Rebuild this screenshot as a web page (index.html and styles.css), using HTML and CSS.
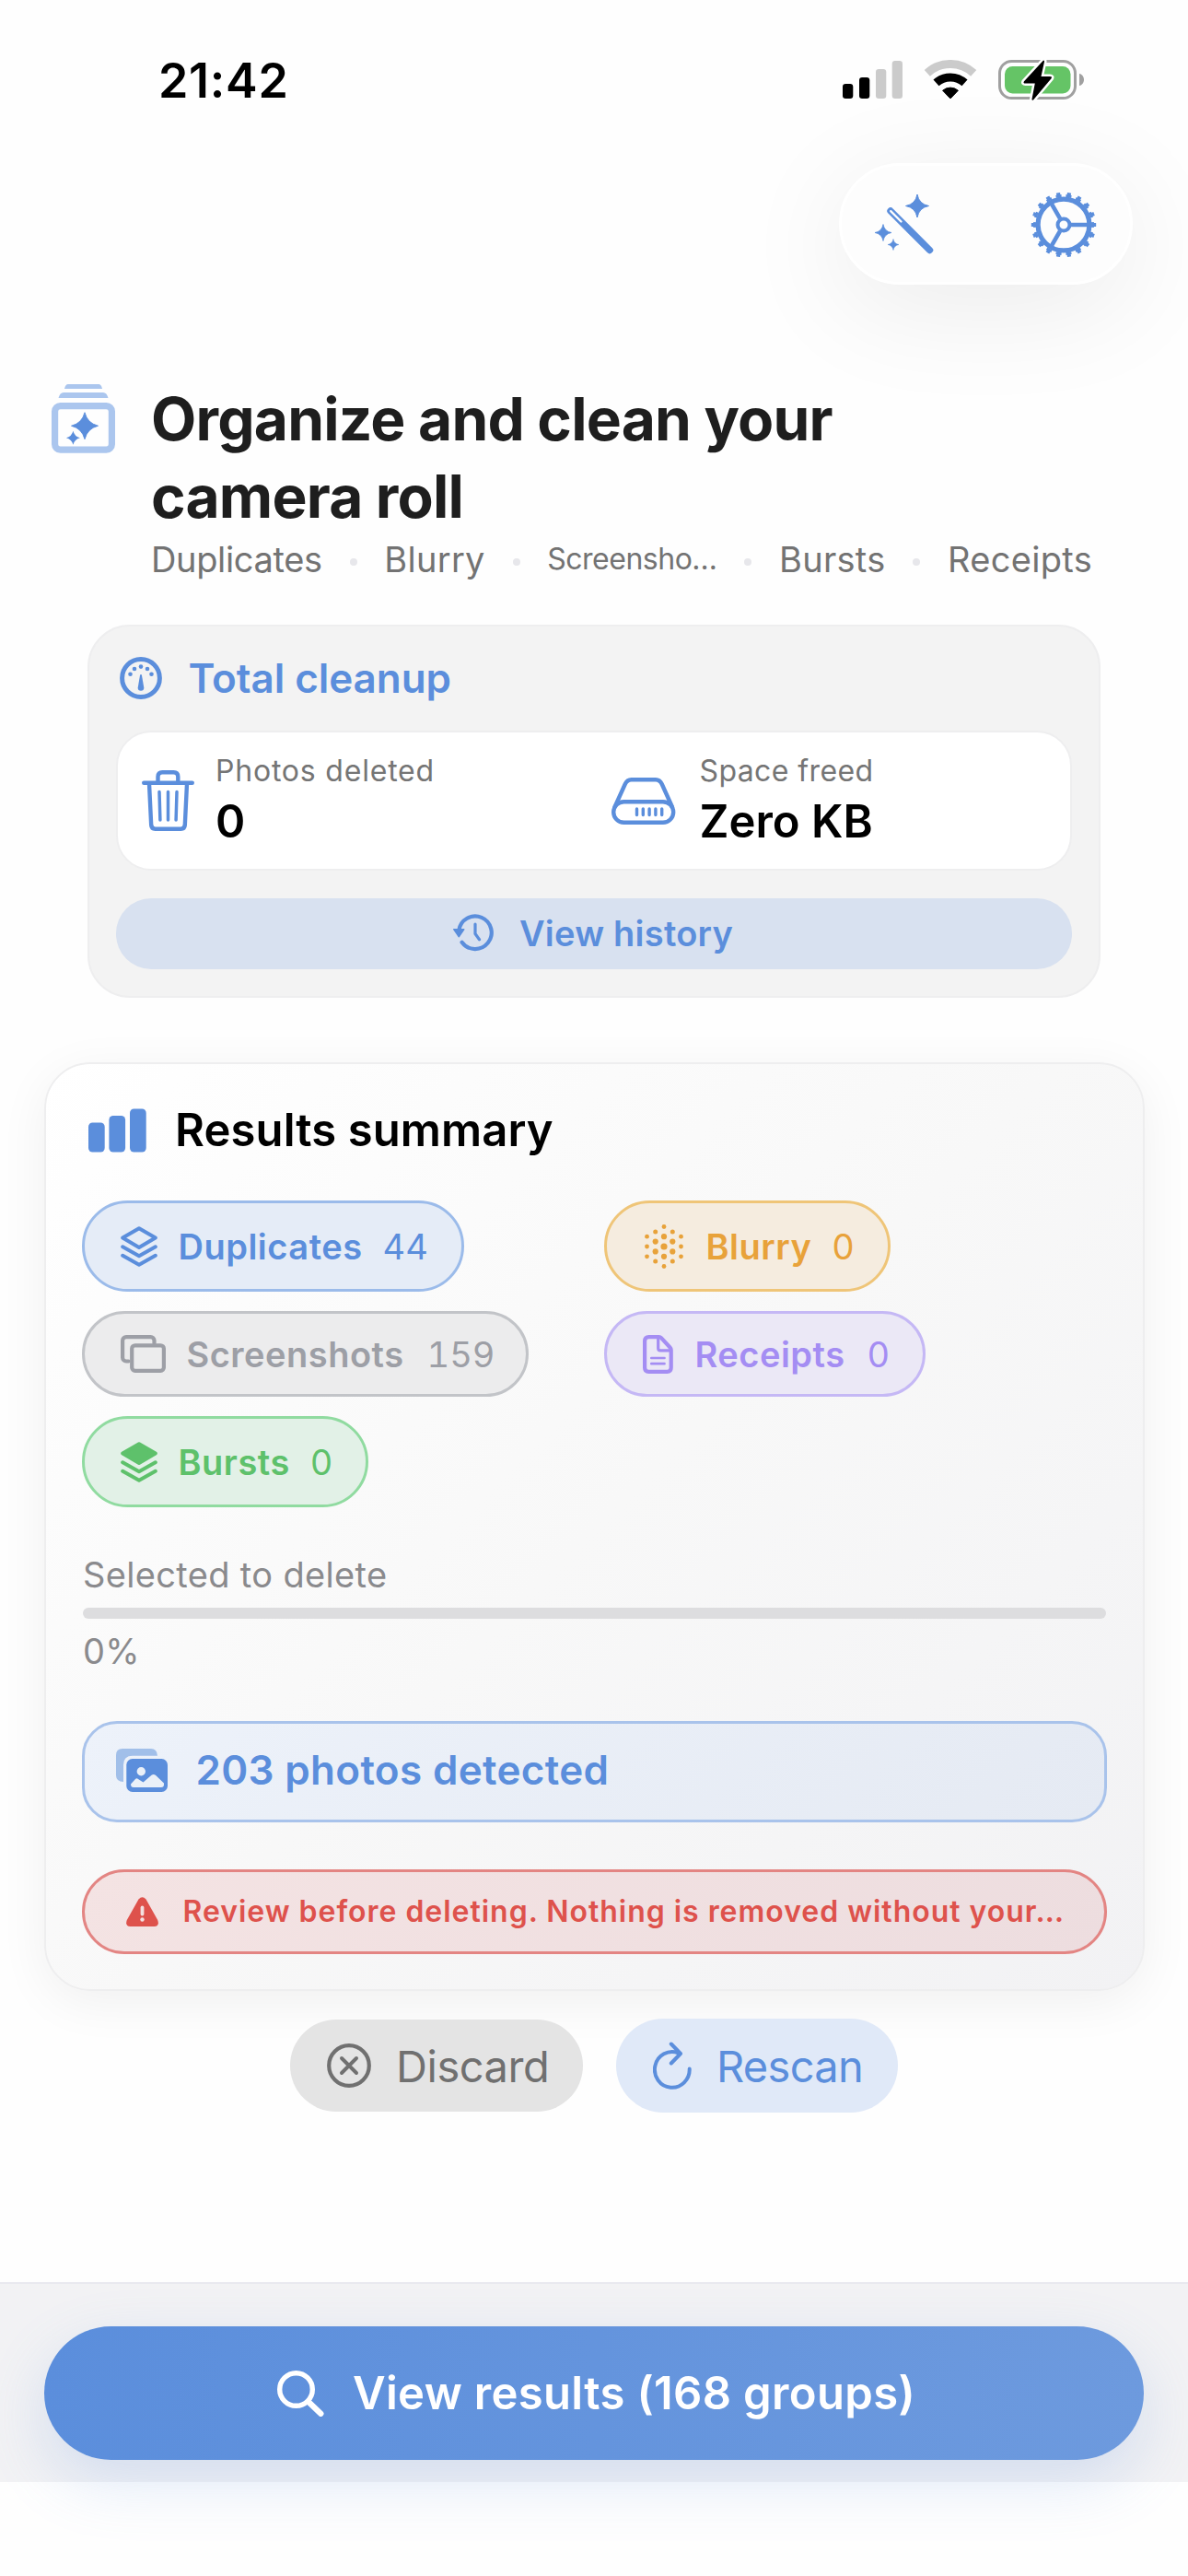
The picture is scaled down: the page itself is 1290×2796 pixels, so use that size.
FILE: index.html
```
<!DOCTYPE html>
<html lang="en">
<head>
  <meta charset="UTF-8">
  <title>Camera Roll Cleaner</title>
  <link rel="stylesheet" href="styles.css">
</head>
<body>
  <div class="screen">
    <!-- Status bar -->
    <div class="status-bar">
      <span class="time">21:42</span>
      <div class="status-icons">
        <svg width="65" height="44" viewBox="0 0 65 44">
          <rect x="0" y="26" width="11.3" height="16" rx="3.2"/>
          <rect x="18" y="19" width="11.3" height="23" rx="3.2"/>
          <rect x="36" y="10" width="11.3" height="32" rx="3.2" fill="#cbcbcb"/>
          <rect x="53.7" y="1" width="11.3" height="41" rx="3.2" fill="#cbcbcb"/>
        </svg>
        <svg width="58" height="44" viewBox="0 0 58 44" fill="none">
          <path d="M3.8 14.4A37 37 0 0 1 54.2 14.4" stroke="#cbcbcb" stroke-width="9" stroke-linejoin="round"/>
          <path d="M13.5 24.9A23 23 0 0 1 44.5 24.9" stroke="#000" stroke-width="9"/>
          <path d="M20.6 33.2A13 13 0 0 1 37.4 33.2L29.600 41.400Q29 42 28.400 41.400Z" fill="#000" stroke="#000" stroke-width="1" stroke-linejoin="round"/>
        </svg>
        <svg width="93" height="45" viewBox="0 0 93 45">
          <rect x="1.500" y="1.500" width="82" height="40" rx="13" fill="none" stroke="#a0a0a0" stroke-width="3"/>
          <rect x="7" y="7" width="71.500" height="29.500" rx="8.500" fill="#65c466"/>
          <path d="M88 15C91 15.500 93 18.500 93 21.500S91 27.500 88 28Z" fill="#a0a0a0"/>
          <path d="M49 .5Q50.300 .3 50 2L46.500 18H56Q59 18 57.500 20.300L38 43.500Q36.500 44.500 36.500 42.500L39.800 25.500H29.500Q26.500 25.500 28 23.200Z" stroke="#fff" stroke-width="5" paint-order="stroke"/>
        </svg>
      </div>
    </div>

    <!-- Toolbar -->
    <div class="toolbar">
      <div class="toolbar-pill">
        <svg width="64" height="66" viewBox="0 0 64 66" fill="#5b8edc">
          <path transform="translate(46 12.500) scale(1.25)" d="M0-10Q1.500-1.500 10 0Q1.500 1.500 0 10Q-1.500 1.500-10 0Q-1.500-1.500 0-10Z" stroke="#5b8edc" stroke-width=".8" stroke-linejoin="round"/>
          <path transform="translate(9 41.500) scale(.9)" d="M0-10Q1.500-1.500 10 0Q1.500 1.500 0 10Q-1.500 1.500-10 0Q-1.500-1.500 0-10Z" stroke="#5b8edc" stroke-width=".8" stroke-linejoin="round"/>
          <path transform="translate(20 54.500) scale(.6)" d="M0-10Q1.500-1.500 10 0Q1.500 1.500 0 10Q-1.500 1.500-10 0Q-1.500-1.500 0-10Z" stroke="#5b8edc" stroke-width=".8" stroke-linejoin="round"/>
          <path d="M17 18L59.500 60.500" stroke="#5b8edc" stroke-width="7.400" stroke-linecap="round"/>
          <path d="M17.200 18.200L28.500 29.500" stroke="#fdfdfd" stroke-width="2.400" stroke-linecap="round"/>
        </svg>
        <svg width="72" height="72" viewBox="-36 -36 72 72" fill="none" stroke="#5b8edc">
          <circle r="27.900" stroke-width="5.200"/>
          <circle r="31.500" stroke-width="3" pathLength="36" stroke-dasharray="1.100 .9" stroke-dashoffset=".55"/>
          <circle r="33.700" stroke-width="3" pathLength="36" stroke-dasharray=".7 1.300" stroke-dashoffset=".35"/>
          <circle r="6.500" stroke-width="4"/>
          <path d="M8 0H27M-4-6.900L-13.500-23.400M-4 6.900L-13.500 23.400" stroke-width="4.600"/>
        </svg>
      </div>
    </div>

    <!-- Hero -->
    <div class="hero">
      <svg class="hero-icon" width="70" height="76" viewBox="0 0 70 76">
        <path d="M18 1H51Q54 1 55 6H14Q15 1 18 1ZM13 10H56Q60 10 61.500 16H7.500Q9 10 13 10Z" fill="#abc6ee"/>
        <rect x="3.600" y="24.600" width="61.800" height="47.600" rx="6" fill="none" stroke="#abc6ee" stroke-width="7.200"/>
        <path transform="translate(36 46.200) scale(1.450)" d="M0-10Q2-2 10 0Q2 2 0 10Q-2 2-10 0Q-2-2 0-10Z" fill="#5b8edc" stroke="#5b8edc" stroke-width=".6" stroke-linejoin="round"/>
        <path transform="translate(23.400 59.200) scale(.75)" d="M0-10Q2-2 10 0Q2 2 0 10Q-2 2-10 0Q-2-2 0-10Z" fill="#5b8edc"/>
      </svg>
      <div class="hero-text">
        <h1>Organize and clean your camera roll</h1>
        <div class="categories">
          <span class="category tight">Duplicates</span>
          <i class="dot"></i>
          <span class="category">Blurry</span>
          <i class="dot"></i>
          <span class="category small">Screensho…</span>
          <i class="dot"></i>
          <span class="category">Bursts</span>
          <i class="dot"></i>
          <span class="category">Receipts</span>
        </div>
      </div>
    </div>

    <!-- Total cleanup -->
    <div class="cleanup">
      <div class="cleanup-header">
        <svg width="46" height="46" viewBox="-23 -23 46 46" fill="#5b8edc">
          <circle r="20.400" fill="none" stroke="#5b8edc" stroke-width="5"/>
          <circle cx="-11.500" cy="-4.300" r="2.300"/>
          <circle cx="-7" cy="-10" r="2.300"/>
          <circle cx="0" cy="-12.400" r="2.300"/>
          <circle cx="7" cy="-10" r="2.300"/>
          <circle cx="11.500" cy="-4.300" r="2.300"/>
          <path d="M-.9-3.500Q0-4.500 .9-3.500L3.300 10.500A3.300 3.300 0 0 1-3.300 10.500Z"/>
        </svg>
        <span>Total cleanup</span>
      </div>
      <div class="stats">
        <div class="stat">
          <svg class="trash" width="57" height="66" viewBox="0 0 57 66" fill="none" stroke="#5b8edc" stroke-width="4.400" stroke-linecap="round" stroke-linejoin="round">
            <path d="M2.200 13.700H54.800M17.500 13V7Q17.500 2.200 22.300 2.200H34.500Q39.300 2.200 39.300 7V13M8 14.500L10.200 59.500Q10.500 63.700 14.600 63.700H42.400Q46.500 63.700 46.800 59.500L49 14.500"/>
            <path d="M19 23.500L19.900 54M28.500 23.500V54M38 23.500L37.100 54" stroke-width="3.500"/>
          </svg>
          <div>
            <div class="stat-label">Photos deleted</div>
            <div class="stat-value">0</div>
          </div>
        </div>
        <div class="stat">
          <svg class="drive" width="70" height="51" viewBox="0 0 70 51" fill="none" stroke="#5b8edc" stroke-width="4.400" stroke-linecap="round">
            <rect x="2.200" y="26.200" width="65" height="22.600" rx="11.300"/>
            <path d="M3.500 32L14.800 7Q17 2.200 21.500 2.200H48Q52.500 2.200 54.700 7L66 32"/>
            <path d="M27.500 34V40.500M34.300 34V40.500M41.100 34V40.500M47.900 34V40.500M54.700 34V40.500" stroke-width="3.400"/>
          </svg>
          <div>
            <div class="stat-label space">Space freed</div>
            <div class="stat-value">Zero KB</div>
          </div>
        </div>
      </div>
      <div class="history-btn">
        <svg width="44" height="41" viewBox="0 0 44 41" fill="none" stroke="#5b8edc" stroke-linecap="round">
          <path d="M6.300 17.800A17.800 17.800 0 1 1 9.600 30.800" stroke-width="4.200"/>
          <path d="M1 16.800H11.600L6.300 24.500Z" fill="#5b8edc" stroke-width="1.800" stroke-linejoin="round"/>
          <path d="M24 11V21.500L28.500 27.800" stroke-width="3.200" stroke-linejoin="round"/>
        </svg>
        <span>View history</span>
      </div>
    </div>

    <!-- Results summary -->
    <div class="results">
      <div class="results-header">
        <svg width="63" height="48" viewBox="0 0 63 48" fill="#5b8edc">
          <rect x="0" y="15.500" width="17.700" height="32" rx="4.500"/>
          <rect x="22.400" y="8" width="17.700" height="39.500" rx="4.500"/>
          <rect x="45" y=".5" width="17.700" height="47" rx="4.500"/>
        </svg>
        <h2>Results summary</h2>
      </div>

      <div class="chips">
        <div class="chip blue">
          <svg width="40" height="44" viewBox="0 0 40 44" fill="none" stroke="currentColor" stroke-width="4" stroke-linejoin="round" stroke-linecap="round">
            <path d="M20 2.200L37.800 12.600L20 23L2.200 12.600Z"/>
            <path d="M2.200 22.300L20 32.200L37.800 22.300M2.200 31.800L20 41.800L37.800 31.800"/>
          </svg>
          <span class="chip-name">Duplicates</span>
          <span class="chip-count">44</span>
        </div>
        <div class="chip orange">
          <svg width="42" height="48" viewBox="-21 -24 42 48" fill="currentColor">
            <circle r="3.600"/>
            <circle cy="-21.500" r="2.400"/><circle cy="21.500" r="2.400"/>
            <circle cy="-10.800" r="3.100"/><circle cy="10.800" r="3.100"/>
            <circle cx="-9.300" cy="-16.100" r="2.500"/><circle cx="9.300" cy="-16.100" r="2.500"/>
            <circle cx="-9.300" cy="16.100" r="2.500"/><circle cx="9.300" cy="16.100" r="2.500"/>
            <circle cx="-9.300" cy="-5.400" r="3.100"/><circle cx="9.300" cy="-5.400" r="3.100"/>
            <circle cx="-9.300" cy="5.400" r="3.100"/><circle cx="9.300" cy="5.400" r="3.100"/>
            <circle cx="-18.500" cy="-10.800" r="2.400"/><circle cx="18.500" cy="-10.800" r="2.400"/>
            <circle cx="-18.500" r="2.400"/><circle cx="18.500" r="2.400"/>
            <circle cx="-18.500" cy="10.800" r="2.400"/><circle cx="18.500" cy="10.800" r="2.400"/>
          </svg>
          <span class="chip-name">Blurry</span>
          <span class="chip-count">0</span>
        </div>
        <div class="chip gray">
          <svg width="49" height="41" viewBox="0 0 49 41" fill="none" stroke="currentColor" stroke-width="4.200" stroke-linecap="round">
            <path d="M8.500 28.500H6.100a4 4 0 0 1-4-4V6.100a4 4 0 0 1 4-4H32.500a4 4 0 0 1 4 4V9"/>
            <rect x="12.200" y="11.300" width="34.700" height="27.500" rx="3.500"/>
          </svg>
          <span class="chip-name">Screenshots</span>
          <span class="chip-count">159</span>
        </div>
        <div class="chip purple">
          <svg width="33" height="42" viewBox="0 0 33 42" fill="none" stroke="currentColor" stroke-width="4.200" stroke-linejoin="round">
            <path d="M6.500 2.100H17.500Q19 2.100 20 3.200L29.500 13.500Q30.700 14.800 30.700 16.300V35.500Q30.700 39.900 26.400 39.900H6.400Q2.100 39.900 2.100 35.500V6.500Q2.100 2.100 6.500 2.100Z"/>
            <path d="M16.700 3V14.500Q16.700 16.800 19 16.800H30" stroke-width="3.200"/>
            <path d="M9.300 25H23.500M9.300 31.200H23.500" stroke-width="2.700" stroke-linecap="round"/>
          </svg>
          <span class="chip-name">Receipts</span>
          <span class="chip-count">0</span>
        </div>
        <div class="chip green">
          <svg width="40" height="44" viewBox="0 0 40 44" fill="none" stroke="currentColor" stroke-width="4" stroke-linejoin="round" stroke-linecap="round">
            <path d="M20 2.200L37.800 12.600L20 23L2.200 12.600Z" fill="currentColor"/>
            <path d="M2.200 22.300L20 32.200L37.800 22.300M2.200 31.800L20 41.800L37.800 31.800"/>
          </svg>
          <span class="chip-name">Bursts</span>
          <span class="chip-count">0</span>
        </div>
      </div>

      <div class="progress">
        <div class="progress-text">Selected to delete</div>
        <div class="progress-track"></div>
        <div class="progress-text">0%</div>
      </div>

      <div class="detected">
        <svg width="56" height="47" viewBox="0 0 56 47">
          <path d="M7 0H38Q44.500 0 45 7.700H18Q8 7.700 8 17.500V36Q0 35.500 0 29V7Q0 0 7 0Z" fill="#a1bfe9"/>
          <rect x="11.300" y="11" width="44.700" height="36" rx="6.500" fill="#5b8edc"/>
          <circle cx="27.300" cy="24.700" r="4.700" fill="#eaf0f8"/>
          <path d="M16 38.500L21 33Q22.500 31.500 24 33L29.500 36.500L38.500 28.800Q40.700 27 42.900 28.800L52 37.500V39Q52 42 49 42H19Q16 42 16 38.500Z" fill="#eaf0f8"/>
        </svg>
        <span>203 photos detected</span>
      </div>

      <div class="alert">
        <svg width="35" height="32" viewBox="0 0 35 32">
          <path d="M13.500 2.500Q17.500-2 21.500 2.500L34.200 25Q36.500 31.500 30.500 32H4.500Q-1.500 31.500 .8 25Z" fill="#de524c"/>
          <path d="M17.500 11.500V18.500" stroke="#f3e0e0" stroke-width="3.800" stroke-linecap="round"/>
          <circle cx="17.500" cy="24.500" r="2.200" fill="#f3e0e0"/>
        </svg>
        <span>Review before deleting. Nothing is removed without your…</span>
      </div>
    </div>

    <!-- Actions -->
    <div class="actions">
      <div class="action discard">
        <svg width="48" height="48" viewBox="0 0 48 48" fill="none" stroke="currentColor" stroke-linecap="round">
          <circle cx="24" cy="24" r="21.800" stroke-width="4.200"/>
          <path d="M16 16L32 32M32 16L16 32" stroke-width="3.900"/>
        </svg>
        <span>Discard</span>
      </div>
      <div class="action rescan">
        <svg width="42" height="52" viewBox="0 0 42 52" fill="none" stroke="currentColor" stroke-width="4" stroke-linecap="round" stroke-linejoin="round">
          <path d="M39.700 29.500A18.900 19.400 0 1 1 27.500 12.300"/>
          <path d="M19.800 2.500L30 13L19.800 23.500"/>
        </svg>
        <span>Rescan</span>
      </div>
    </div>

    <!-- Bottom bar -->
    <div class="bottom-bar">
      <div class="view-results">
        <svg width="51" height="50" viewBox="0 0 51 50" fill="none" stroke="#fff" stroke-linecap="round">
          <circle cx="20.500" cy="20.500" r="17.800" stroke-width="5.400"/>
          <path d="M34.500 34.500L47.300 46.800" stroke-width="6.400"/>
        </svg>
        <span>View results (168 groups)</span>
      </div>
    </div>
  </div>
</body>
</html>
```
FILE: styles.css
```
/* Reset styles */
*,
*::before,
*::after {
  box-sizing: border-box;
  margin: 0;
  padding: 0;
}

body {
  font-family: Inter, "Liberation Sans", sans-serif;
  background-color: #fefefe;
  color: #000;
}

svg {
  display: block;
  flex-shrink: 0;
}

span {
  white-space: nowrap;
}

.screen {
  width: 1290px;
  height: 2796px;
  display: flex;
  flex-direction: column;
  overflow: hidden;
}

/* Status bar */
.status-bar {
  height: 177px;
  padding: 57px 113px 0 172px;
  display: flex;
  justify-content: space-between;
  align-items: flex-start;
}

.time {
  font-size: 52px;
  font-weight: 600;
  line-height: 62px;
  letter-spacing: 0.7px;
}

.status-icons {
  display: flex;
  gap: 23px;
  margin-top: 8px;
}

/* Toolbar */
.toolbar {
  display: flex;
  justify-content: flex-end;
  padding-right: 60px;
}

.toolbar-pill {
  width: 319px;
  height: 132px;
  padding: 2px 36px 0;
  display: flex;
  align-items: center;
  justify-content: space-between;
  border: 3px solid #fff;
  border-radius: 66px;
  background-color: #fdfdfd;
  box-shadow: 0 24px 120px rgba(0, 0, 0, 0.08);
}

/* Hero */
.hero {
  display: flex;
  gap: 38px;
  margin-top: 104px;
  padding-left: 56px;
}

.hero-icon {
  margin-top: 3px;
}

.hero-text {
  width: 1022px;
}

h1 {
  width: 800px;
  font-size: 64px;
  font-weight: 700;
  line-height: 84px;
  letter-spacing: -0.8px;
  color: #1e1e1e;
}

.categories {
  display: flex;
  align-items: center;
  justify-content: space-between;
  height: 46px;
  margin-top: 3px;
}

.category {
  font-size: 38px;
  line-height: 46px;
  letter-spacing: 0.3px;
  color: #737373;
}

.category.tight {
  letter-spacing: -0.35px;
}

.category.small {
  font-size: 32px;
  letter-spacing: -0.5px;
}

.dot {
  width: 8px;
  height: 8px;
  margin-top: 6px;
  border-radius: 50%;
  background-color: #e7e7eb;
}

/* Total cleanup card */
.cleanup {
  display: flex;
  flex-direction: column;
  gap: 30px;
  margin: 48px 95px 0;
  padding: 29px;
  border: 2px solid #eeeeef;
  border-radius: 46px;
  background-color: #f3f3f3;
}

.cleanup-header {
  display: flex;
  align-items: center;
  gap: 29px;
  padding-left: 3.5px;
  font-size: 44px;
  font-weight: 600;
  line-height: 54px;
  letter-spacing: -0.06px;
  color: #5b8edc;
}

.stats {
  display: grid;
  grid-template-columns: 1fr 1fr;
  column-gap: 37px;
  height: 152px;
  padding: 0 26px;
  border: 2px solid #eeeeef;
  border-radius: 38px;
  background-color: #fff;
}

.stat {
  display: flex;
  align-items: center;
}

.trash {
  margin-right: 23px;
}

.drive {
  margin-right: 26px;
}

.stat-label {
  margin-bottom: 6px;
  font-size: 32px;
  line-height: 40px;
  letter-spacing: 0.79px;
  color: #757575;
}

.stat-label.space {
  letter-spacing: 0.4px;
}

.stat-value {
  font-size: 49px;
  font-weight: 600;
  line-height: 58px;
}

.history-btn {
  display: flex;
  align-items: center;
  justify-content: center;
  gap: 28px;
  height: 77px;
  padding: 0 2px 2px 0;
  border-radius: 38px;
  background-color: #d8e1f0;
  font-size: 38px;
  font-weight: 600;
  letter-spacing: 0.24px;
  color: #5b8edc;
}

/* Results card */
.results {
  height: 1008px;
  margin: 70px 47.5px 0 48px;
  padding: 42px 38.5px 0;
  border: 2px solid #eeeeef;
  border-radius: 50px;
  background: linear-gradient(135deg, #ffffff, #f8f8f8 50%, #f2f2f4);
  box-shadow: 0 12px 54px rgba(0, 0, 0, 0.06);
}

.results-header {
  display: flex;
  align-items: center;
  gap: 31px;
  padding-left: 7.5px;
}

h2 {
  font-size: 49px;
  font-weight: 600;
  line-height: 60px;
  letter-spacing: 0.1px;
}

.chips {
  display: grid;
  grid-template-columns: 567px 1fr;
  grid-template-rows: 99px 93px 99px;
  row-gap: 21px;
  align-items: center;
  justify-items: start;
  margin-top: 46px;
}

.chip {
  display: flex;
  align-items: center;
  height: 100%;
  padding: 0 36px 0 39px;
  border: 3px solid;
  border-radius: 50px;
  font-size: 38px;
}

.chip-name {
  margin: 0 22px 0 23px;
  font-weight: 600;
  letter-spacing: 0.5px;
}

.chip-count {
  font-variant-numeric: tabular-nums;
}

.chip.blue {
  color: #5b8edc;
  border-color: #9bbbea;
  background-color: #e5ecf7;
}

.chip.orange {
  padding-left: 41px;
  color: #e8a23a;
  border-color: #efc578;
  background-color: #f5ecdf;
}

.chip.orange .chip-name {
  margin-left: 25px;
}

.chip.gray {
  color: #9d9fa6;
  border-color: #c2c4c8;
  background-color: #ececed;
}

.chip.gray .chip-name {
  margin-right: 25px;
}

.chip.gray .chip-count {
  margin-right: -2px;
}

.chip.purple {
  color: #a48df3;
  border-color: #c5b8f5;
  background-color: #ebe8f6;
}

.chip.purple .chip-name {
  margin: 0 24px;
}

.chip.green {
  color: #5ec16b;
  border-color: #90dba0;
  background-color: #e2f1e7;
}

/* Progress */
.progress {
  margin-top: 50px;
  padding: 0 1.5px;
}

.progress-text {
  font-size: 38px;
  line-height: 46px;
  letter-spacing: 0.34px;
  color: #8a8a8d;
}

.progress-track {
  height: 12px;
  margin: 13px 0 12px;
  border-radius: 6px;
  background-color: #dddddf;
}

.detected {
  display: flex;
  align-items: center;
  gap: 31px;
  height: 110px;
  margin-top: 53px;
  padding: 0 34px 4px;
  border: 3px solid #a9c3eb;
  border-radius: 38px;
  background: linear-gradient(135deg, #edf2fa, #e5eaf3);
  font-size: 44px;
  font-weight: 600;
  letter-spacing: 0.32px;
  color: #5b8edc;
}

.alert {
  display: flex;
  align-items: center;
  gap: 27px;
  height: 92px;
  margin-top: 51px;
  padding: 0 45px 1px;
  border: 3px solid #e38583;
  border-radius: 47px;
  background: linear-gradient(135deg, #f4e3e3, #eddddf);
  font-size: 32px;
  font-weight: 600;
  letter-spacing: 0.97px;
  color: #de524c;
}

/* Actions */
.actions {
  display: flex;
  justify-content: center;
  align-items: center;
  gap: 36px;
  margin-top: 30px;
}

.action {
  display: flex;
  align-items: center;
  padding-left: 40px;
  border-radius: 51px;
  font-size: 47px;
}

.discard {
  gap: 27px;
  width: 318px;
  height: 100px;
  background-color: #e4e4e4;
  color: #707070;
  letter-spacing: -0.45px;
}

.rescan {
  gap: 27px;
  width: 306px;
  height: 102px;
  background-color: #e0e9f8;
  color: #5b8edc;
  letter-spacing: -0.69px;
}

/* Bottom bar */
.bottom-bar {
  height: 217px;
  margin-top: 184px;
  padding: 46px 48px 0;
  border-top: 2px solid #e9e9ef;
  background-color: #f2f2f4;
}

.view-results {
  display: flex;
  align-items: center;
  justify-content: center;
  gap: 31px;
  height: 145px;
  padding-left: 5px;
  border-radius: 73px;
  background: linear-gradient(90deg, #5b8edc, #6d9ade);
  box-shadow: 0 24px 66px rgba(91, 142, 220, 0.2);
  font-size: 49px;
  font-weight: 600;
  letter-spacing: 0.33px;
  color: #fff;
}
```
